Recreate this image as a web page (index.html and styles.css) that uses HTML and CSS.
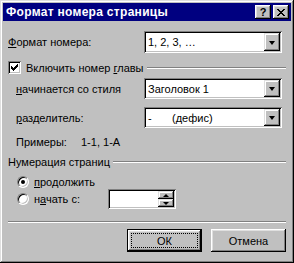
FILE: index.html
```html
<!DOCTYPE html>
<html lang="ru">
<head>
<meta charset="utf-8">
<link rel="stylesheet" href="styles.css">
</head>
<body>
<div class="window">
  <div class="titlebar">
    <span class="title">Формат номера страницы</span>
    <div class="tbtns">
      <span class="tbtn help">?</span>
      <span class="tbtn close"><svg width="8" height="7" viewBox="0 0 8 7"><path d="M0 0h2v1h1v1h2V1h1V0h2v1H7v1H6v1H5v1h1v1h1v1h1v1H6V6H5V5H3v1H2v1H0V6h1V5h1V4h1V3H2V2H1V1H0z" fill="#000"/></svg></span>
    </div>
  </div>
  <div class="content">
    <div class="row r1">
      <span class="lbl"><u>Ф</u>ормат номера:</span>
      <div class="combo"><span class="val">1, 2, 3, …</span><span class="dd"><i class="arrow"></i></span></div>
    </div>
    <div class="group g1">
      <span class="check"><svg width="8" height="8" viewBox="0 0 8 8"><path d="M7 0v3h-1v1h-1v1h-1v1h-1v1h-1v-1h-1v-1h-1v-3h1v1h1v1h1v-1h1v-1h1v-1h1v-1z" fill="#000"/></svg></span>
      <span class="gtext">Включить номер <u>г</u>лавы</span>
      <span class="gline"></span>
    </div>
    <div class="row r2 ind">
      <span class="lbl ilbl"><u>н</u>ачинается со стиля</span>
      <div class="combo"><span class="val">Заголовок 1</span><span class="dd"><i class="arrow"></i></span></div>
    </div>
    <div class="row r3 ind">
      <span class="lbl ilbl"><u>р</u>азделитель:</span>
      <div class="combo"><span class="val"><span class="dash">-</span>(дефис)</span><span class="dd"><i class="arrow"></i></span></div>
    </div>
    <div class="row ex ind">
      <span class="exl">Примеры:</span><span>1-1, 1-А</span>
    </div>
    <div class="group g2">
      <span class="gtext">Нумерация страниц</span>
      <span class="gline"></span>
    </div>
    <div class="row rad1">
      <span class="radio on"><i class="dot"></i></span><span><u>п</u>родолжить</span>
    </div>
    <div class="row rad2">
      <span class="radio"></span><span class="rlbl">н<u>а</u>чать с:</span>
      <div class="spin"><span class="sbtns"><span class="sb"><i class="up"></i></span><span class="sb"><i class="down"></i></span></span></div>
    </div>
    <div class="sep"></div>
    <div class="buttons">
      <span class="btn def"><span class="focus">ОК</span></span>
      <span class="btn">Отмена</span>
    </div>
  </div>
</div>
</body>
</html>
```
FILE: styles.css
```css
* { box-sizing: border-box; }
html, body { margin: 0; padding: 0; background: #c0c0c0; }
body { font-family: "Liberation Sans", Arial, sans-serif; font-size: 11px; color: #000; }
u { text-decoration: underline; text-underline-offset: 1px; }

.window {
  width: 294px; height: 263px; padding: 3px;
  background: #c0c0c0;
  box-shadow: inset -1px -1px #000, inset 1px 1px #dfdfdf, inset -2px -2px #808080, inset 2px 2px #fff;
}
.titlebar {
  height: 18px; background: #000080; color: #fff;
  display: flex; align-items: center; justify-content: space-between;
  padding: 0 2px 0 3px;
}
.title { font-weight: bold; font-size: 12px; letter-spacing: 0.3px; }
.tbtns { display: flex; gap: 2px; }
.tbtn {
  width: 16px; height: 14px; background: #c0c0c0;
  box-shadow: inset -1px -1px #000, inset 1px 1px #fff, inset -2px -2px #808080, inset 2px 2px #dfdfdf;
  display: flex; align-items: center; justify-content: center;
  color: #000; font-weight: bold; font-size: 11px; line-height: 1;
}
.help { padding-top: 1px; }
.content { padding: 10px 5px 0 5px; }
.row { display: flex; align-items: center; }
.lbl { width: 136px; }
.ind { padding-left: 8px; }
.ilbl { width: 128px; }
.r1 { height: 22px; }
.combo {
  width: 138px; height: 100%; background: #fff; position: relative;
  box-shadow: inset 1px 1px #808080, inset -1px -1px #fff, inset 2px 2px #000, inset -2px -2px #c0c0c0;
  display: flex; align-items: center; padding: 2px;
}
.val { flex: 1; padding-left: 2px; }
.dash { display: inline-block; width: 24px; }
.dd {
  width: 16px; height: 100%; background: #c0c0c0;
  box-shadow: inset -1px -1px #000, inset 1px 1px #dfdfdf, inset -2px -2px #808080, inset 2px 2px #fff;
  display: flex; align-items: center; justify-content: center;
}
.arrow {
  width: 0; height: 0; border-left: 3.5px solid transparent; border-right: 3.5px solid transparent;
  border-top: 4px solid #000; margin-top: 1px;
}
.group { display: flex; align-items: center; height: 13px; }
.g1 { margin-top: 8px; }
.check {
  width: 13px; height: 13px; background: #fff;
  box-shadow: inset 1px 1px #808080, inset -1px -1px #fff, inset 2px 2px #000, inset -2px -2px #c0c0c0;
  display: flex; align-items: center; justify-content: center; margin-right: 5px;
}
.gline { flex: 1; height: 2px; border-top: 1px solid #808080; border-bottom: 1px solid #fff; margin-left: 3px; }
.r2 { height: 21px; margin-top: 4px; }
.r3 { height: 21px; margin-top: 8px; }
.ex { height: 13px; margin-top: 7px; }
.exl { width: 65px; }
.g2 { margin-top: 7px; }
.rad1 { height: 13px; margin-top: 7px; padding-left: 9px; }
.rad2 { height: 20px; margin-top: 1px; padding-left: 9px; }
.radio {
  width: 12px; height: 12px; border-radius: 50%; background: #fff; margin-right: 5px;
  border: 1px solid; border-color: #808080 #fff #fff #808080;
  box-shadow: inset 1px 1px #000, inset -1px -1px #c0c0c0;
  display: flex; align-items: center; justify-content: center;
}
.dot { width: 4px; height: 4px; border-radius: 50%; background: #000; }
.rlbl { width: 74px; }
.spin {
  width: 68px; height: 20px; background: #fff;
  box-shadow: inset 1px 1px #808080, inset -1px -1px #fff, inset 2px 2px #000, inset -2px -2px #c0c0c0;
  display: flex; justify-content: flex-end; padding: 2px;
}
.sbtns { display: flex; flex-direction: column; width: 16px; }
.sb {
  flex: 1; background: #c0c0c0;
  box-shadow: inset -1px -1px #000, inset 1px 1px #dfdfdf, inset -2px -2px #808080, inset 2px 2px #fff;
  display: flex; align-items: center; justify-content: center;
}
.up { width: 0; height: 0; border-left: 3px solid transparent; border-right: 3px solid transparent; border-bottom: 3px solid #000; }
.down { width: 0; height: 0; border-left: 3px solid transparent; border-right: 3px solid transparent; border-top: 3px solid #000; }
.sep { height: 2px; border-top: 1px solid #808080; border-bottom: 1px solid #fff; margin-top: 12px; }
.buttons { display: flex; justify-content: flex-end; gap: 9px; margin-top: 6px; }
.btn {
  width: 75px; height: 23px; background: #c0c0c0;
  box-shadow: inset -1px -1px #000, inset 1px 1px #fff, inset -2px -2px #808080, inset 2px 2px #dfdfdf;
  display: flex; align-items: center; justify-content: center;
}
.btn.def {
  box-shadow: inset 0 0 0 1px #000, inset -2px -2px #000, inset 2px 2px #fff, inset -3px -3px #808080, inset 3px 3px #dfdfdf;
  padding: 4px;
}
.focus { flex: 1; align-self: stretch; border: 1px dotted #000; display: flex; align-items: center; justify-content: center; }
```
